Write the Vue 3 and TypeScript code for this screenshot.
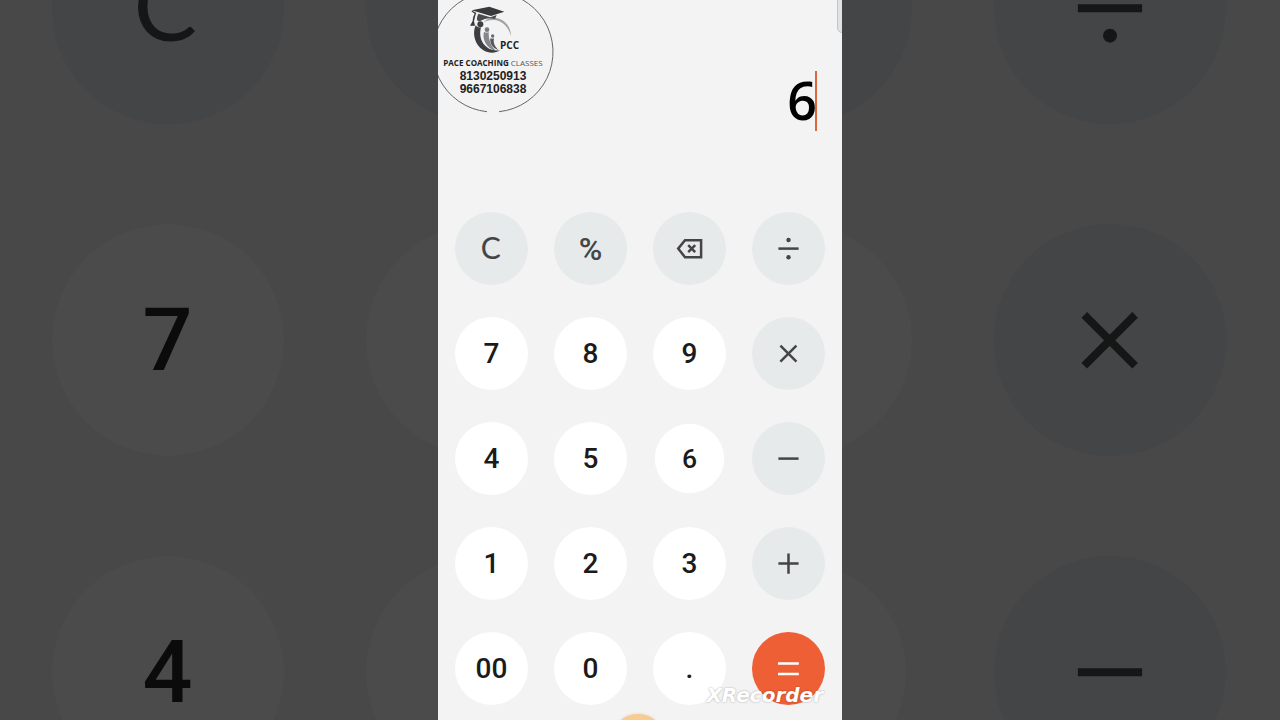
<script setup lang="ts">
import { ref } from 'vue'

interface Key {
  id: string
  label: string
  kind: 'digit' | 'action' | 'equals'
  text?: string
  path?: string
  dots?: number[][]
  pressed?: boolean
}

const entry = ref('6')

const digit = (text: string, label = text, pressed = false): Key => ({ id: text, label, kind: 'digit', text, pressed })

// Icon paths share the 73-unit square of a key face.
const keys: Key[] = [
  { id: 'clear', label: 'Clear', kind: 'action', text: 'C' },
  { id: 'percent', label: 'Percent', kind: 'action', text: '%' },
  {
    id: 'delete',
    label: 'Delete',
    kind: 'action',
    path: 'M25.2 36.6L32 28.2H48.1V45.2H32ZM35.2 33.2L42.2 40.2M42.2 33.2L35.2 40.2',
  },
  { id: 'divide', label: 'Divide', kind: 'action', path: 'M26.4 36.6H46.6', dots: [[36.5, 28], [36.5, 45.2]] },
  digit('7'),
  digit('8'),
  digit('9'),
  { id: 'multiply', label: 'Multiply', kind: 'action', path: 'M28.4 28.6L44.4 44.6M44.4 28.6L28.4 44.6' },
  digit('4'),
  digit('5'),
  digit('6', '6', true),
  { id: 'minus', label: 'Minus', kind: 'action', path: 'M26.4 36.6H46.6' },
  digit('1'),
  digit('2'),
  digit('3'),
  { id: 'plus', label: 'Plus', kind: 'action', path: 'M26.4 36.6H46.6M36.5 26.5V46.7' },
  digit('00', 'Double zero'),
  digit('0'),
  digit('.', 'Decimal point'),
  { id: 'equals', label: 'Equals', kind: 'equals', path: 'M26 31.4H46.8M26 42H46.8' },
]

// The two inner columns of the backdrop sit behind the phone, so only their discs are needed.
const backdropKeys = keys
  .slice(0, 12)
  .map((key, i) => ({ ...key, blank: i % 4 === 1 || i % 4 === 2 }))
</script>

<template>
  <div class="stage">
    <div class="backdrop" aria-hidden="true">
      <div
        v-for="key in backdropKeys"
        :key="key.id"
        class="key"
        :class="[key.kind, 'key-' + key.id, { pressed: key.pressed }]"
      >
        <template v-if="!key.blank">
          <span v-if="key.text">{{ key.text }}</span>
          <svg v-else viewBox="0 0 73 73">
            <path :d="key.path" />
            <circle v-for="(dot, i) in key.dots" :key="i" :cx="dot[0]" :cy="dot[1]" r="2.2" />
          </svg>
        </template>
      </div>
    </div>

    <main class="phone">
      <header class="display">
        <input v-model="entry" class="entry" type="text" aria-label="Calculator display" />
        <span class="caret"></span>
        <span class="scroll-thumb"></span>

        <div class="badge">
          <svg class="ring" viewBox="0 0 122 122" aria-hidden="true">
            <path d="M67 120.7A60 60 0 1 0 55 120.7" />
          </svg>
          <div class="emblem">
            <svg viewBox="120 15 126 147" aria-hidden="true">
              <path d="M160 68C176 45 214 50 231 73C239 84 243 96 243 108C235 80 216 61 191 60C179 59 168 62 160 68Z" fill="#a0a2a4" />
              <path d="M137 76C126 100 134 134 159 150C175 160 194 161 211 151C188 154 166 145 156 124C149 109 150 94 153 82C149 84 142 82 137 76Z" fill="#3c3e41" />
              <path d="M162 95C156 118 168 145 199 153C184 141 175 119 176 96C171 99 166 98 162 95Z" fill="#85878a" />
              <path d="M181 115C179 130 188 146 206 150C194 140 189 128 192 115C188 117 184 117 181 115Z" fill="#55575a" />
              <path d="M125 31L178 20L223 35L183 48Z" fill="#38393b" />
              <path d="M145 41L181 52L200 45L195 57C181 52 162 56 151 63C141 66 137 57 145 41Z" fill="#4a4b4d" />
              <path d="M127 32L139 39C135 47 134 57 132 64L135 77L120 77L128 63C128 53 131 46 134 41L124 34Z" fill="#38393b" />
              <circle cx="151" cy="73" r="9" fill="#3c3e41" />
              <circle cx="171" cy="89" r="7" fill="#77797c" />
              <circle cx="188" cy="108" r="5" fill="#66686b" />
            </svg>
            <strong>PCC</strong>
          </div>
          <p class="brand"><b>PACE COACHING</b> CLASSES</p>
          <p class="contact">8130250913</p>
          <p class="contact">9667106838</p>
        </div>
      </header>

      <div class="keypad">
        <button
          v-for="key in keys"
          :key="key.id"
          type="button"
          class="key"
          :class="[key.kind, 'key-' + key.id, { pressed: key.pressed }]"
          :aria-label="key.label"
        >
          <span v-if="key.text">{{ key.text }}</span>
          <svg v-else viewBox="0 0 73 73" aria-hidden="true">
            <path :d="key.path" />
            <circle v-for="(dot, i) in key.dots" :key="i" :cx="dot[0]" :cy="dot[1]" r="2.2" />
          </svg>
        </button>
      </div>

      <span class="home-dot"></span>
      <span class="watermark">XRecorder</span>
    </main>
  </div>
</template>

<style>
body {
  margin: 0;
}
</style>

<style scoped>
.stage {
  position: relative;
  display: flex;
  justify-content: center;
  height: 100vh;
  overflow: hidden;
  background: #484848;
  font-family: Roboto, sans-serif;
}

.backdrop {
  position: absolute;
  inset: 0;
  display: grid;
  grid-template-columns: repeat(4, 232px);
  grid-auto-rows: 232px;
  gap: 100px 82px;
  place-content: center;
  padding: 0 3px 40px 0;
  font-size: 88px;
}

.key {
  display: flex;
  align-items: center;
  justify-content: center;
  box-sizing: border-box;
  width: 100%;
  aspect-ratio: 1;
  margin: 0;
  padding: 0;
  border: 0;
  border-radius: 50%;
  font-family: Roboto, sans-serif;
  font-weight: 500;
  line-height: 1;
}

.key svg {
  width: 100%;
  height: 100%;
  fill: none;
  stroke: currentColor;
  stroke-width: 2.5;
}

.key circle {
  fill: currentColor;
  stroke: none;
}

.pressed {
  transform: scale(0.95);
}

.key-clear {
  padding: 0 2% 3% 0;
  font-family: Lato, sans-serif;
  font-weight: 400;
}

.backdrop .key {
  background: #4b4b4b;
  color: #0b0b0b;
}

.backdrop .action {
  background: #444546;
  color: #151716;
}

.backdrop .key-clear {
  font-size: 95px;
}

.phone {
  position: relative;
  width: 404px;
  max-width: 100%;
  height: 100%;
  overflow: hidden;
  background: #f3f3f3;
}

.display {
  display: flex;
  align-items: flex-start;
  justify-content: flex-end;
  box-sizing: border-box;
  height: 212px;
  padding: 71px 25px 0 120px;
}

.entry {
  flex: 1;
  min-width: 0;
  height: 58px;
  padding: 0;
  border: 0;
  outline: 0;
  background: transparent;
  color: #000;
  font: 600 52px/58px "Open Sans", sans-serif;
  text-align: right;
}

.caret {
  width: 2px;
  height: 60px;
  margin-left: -2px;
  background: #d9683f;
}

.scroll-thumb {
  position: absolute;
  top: -8px;
  right: -9px;
  width: 12px;
  height: 39px;
  border: 1px solid #c4c4c4;
  border-radius: 5px;
  background: #e2e2e2;
}

.badge {
  position: absolute;
  top: -9px;
  left: -6px;
  display: flex;
  flex-direction: column;
  align-items: center;
  box-sizing: border-box;
  width: 122px;
  height: 122px;
  padding-top: 14px;
  color: #222;
}

.ring {
  position: absolute;
  inset: 0;
  fill: none;
  stroke: #666;
  stroke-width: 1;
}

.emblem {
  display: flex;
  align-items: flex-end;
  width: 46px;
  height: 50px;
}

.emblem svg {
  flex: none;
  width: 42px;
  height: 49px;
  margin-bottom: 1px;
}

.emblem strong {
  margin: 0 0 3px -12px;
  font: 700 10px/13px "Open Sans", sans-serif;
}

.brand,
.contact {
  margin: 0;
  white-space: nowrap;
}

.brand {
  color: #555;
  font: 400 8px/15px "Open Sans", sans-serif;
}

.brand b {
  color: #222;
}

.contact {
  font: 700 12px/13px "Liberation Sans", sans-serif;
}

.keypad {
  display: grid;
  grid-template-columns: repeat(4, 1fr);
  gap: 32px 26px;
  padding: 0 17px;
}

.keypad .key {
  background: #fff;
  color: #1b1b1b;
  font-size: 28px;
  cursor: pointer;
}

.keypad .action {
  background: #e6eaeb;
  color: #434546;
}

.keypad .key-clear {
  font-size: 30px;
}

.keypad .key-percent {
  font-size: 32px;
}

.keypad .equals {
  background: #ee5f35;
  color: #fff;
}

.home-dot {
  position: absolute;
  bottom: -48px;
  left: 50%;
  width: 54px;
  height: 54px;
  margin-left: -29px;
  border-radius: 50%;
  background: #f8cb91;
  box-shadow: 0 0 3px #e8cdb8;
}

.watermark {
  position: absolute;
  right: 19px;
  bottom: 13px;
  color: #fff;
  font: italic 700 20px/24px "DejaVu Sans", sans-serif;
  text-shadow: 0 0 2px rgba(0, 0, 0, 0.35);
}
</style>
